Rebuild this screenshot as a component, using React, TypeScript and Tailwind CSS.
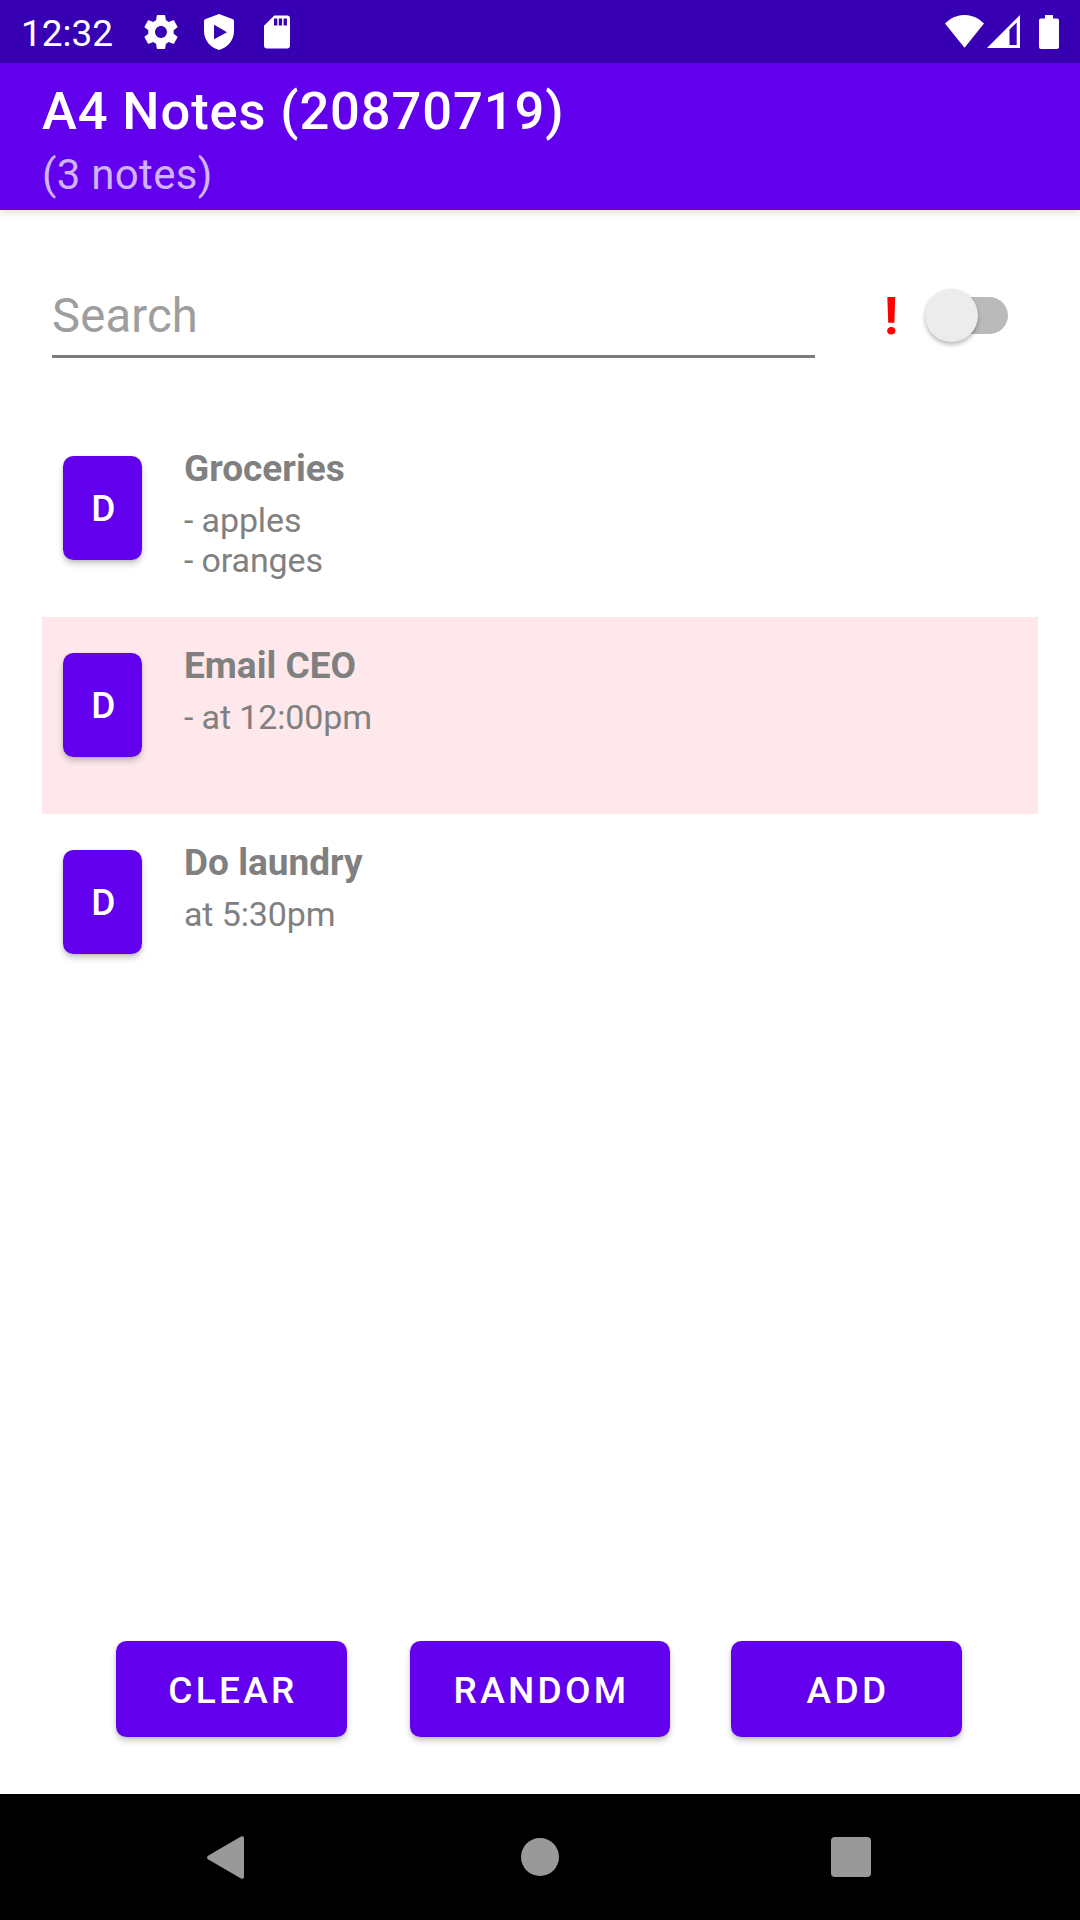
import React from "react";

type Note = { title: string; body: string; important?: boolean };

const notes: Note[] = [
  { title: "Groceries", body: "- apples\n- oranges" },
  { title: "Email CEO", body: "- at 12:00pm", important: true },
  { title: "Do laundry", body: "at 5:30pm" },
];

const buttonShadow = "shadow-[0_4px_6px_rgba(0,0,0,0.2),0_1px_3px_rgba(0,0,0,0.1)]";

function StatusBar() {
  return (
    <div className="flex h-[63px] items-center bg-[#3700b3] text-white">
      <span className="ml-[21px] mt-[4px] w-[123px] text-[37px] leading-none">12:32</span>
      <svg className="h-[34px] w-[34px] shrink-0" viewBox="2 2 20 20" fill="currentColor">
        <path d="M19.43 12.98c.04-.32.07-.64.07-.98s-.03-.66-.07-.98l2.11-1.65c.19-.15.24-.42.12-.64l-2-3.46c-.12-.22-.39-.3-.61-.22l-2.49 1c-.52-.4-1.08-.73-1.69-.98l-.38-2.65C14.46 2.18 14.25 2 14 2h-4c-.25 0-.46.18-.49.42l-.38 2.65c-.61.25-1.17.59-1.69.98l-2.49-1c-.23-.09-.49 0-.61.22l-2 3.46c-.13.22-.07.49.12.64l2.11 1.65c-.04.32-.07.65-.07.98s.03.66.07.98l-2.11 1.65c-.19.15-.24.42-.12.64l2 3.46c.12.22.39.3.61.22l2.49-1c.52.4 1.08.73 1.69.98l.38 2.65c.03.24.24.42.49.42h4c.25 0 .46-.18.49-.42l.38-2.65c.61-.25 1.17-.59 1.69-.98l2.49 1c.23.09.49 0 .61-.22l2-3.46c.12-.22.07-.49-.12-.64l-2.11-1.65zM12 15.5c-1.93 0-3.5-1.57-3.5-3.5s1.57-3.5 3.5-3.5 3.5 1.57 3.5 3.5-1.57 3.5-3.5 3.5z" />
      </svg>
      <svg className="ml-[26px] h-[36px] w-[30px] shrink-0" viewBox="0 0 30 36" fill="currentColor">
        <path fillRule="evenodd" d="M15 0 29 5.2Q30 5.6 30 7V17C30 26 24 33.5 15 36C6 33.5 0 26 0 17V7Q0 5.6 1 5.2ZM10 12V24.3Q10 25.3 11 24.8L23 18.2L11 11.2Q10 10.8 10 12Z" />
      </svg>
      <svg className="ml-[30px] h-[34px] w-[26px] shrink-0" viewBox="0 0 26 34" fill="currentColor">
        <path fillRule="evenodd" d="M10.3 .5H23Q26 .5 26 3.5V30.5Q26 33.5 23 33.5H3Q0 33.5 0 30.5V10.8ZM10 3.5V10.5H13.3V3.5ZM14.8 3.5V10.5H18.1V3.5ZM19.6 3.5V10.5H22.9V3.5Z" />
      </svg>
      <svg className="ml-auto h-[33px] w-[39px] shrink-0" viewBox="0 0 39 33" fill="currentColor">
        <path d="M0 8.6C11-2.9 28-2.9 39 8.6L19.5 32.8Z" />
      </svg>
      <svg className="ml-[3px] h-[33px] w-[33px] shrink-0" viewBox="0 0 33 33" fill="currentColor">
        <path fillRule="evenodd" d="M33 0V33H0ZM22.5 14.5V30H29.7V7.5Z" />
      </svg>
      <svg className="ml-[19px] mr-[21px] h-[34px] w-[20px] shrink-0" viewBox="0 0 20 34" fill="currentColor">
        <path d="M6 0H14V3.5H18Q20 3.5 20 5.5V32Q20 34 18 34H2Q0 34 0 32V5.5Q0 3.5 2 3.5H6Z" />
      </svg>
    </div>
  );
}

function Switch() {
  return (
    <div className="relative ml-[28px] flex h-[53px] w-[83px] items-center justify-end">
      <div className="h-[37px] w-[74px] rounded-full bg-[#bababa]" />
      <div className="absolute left-0 top-0 size-[53px] rounded-full bg-[#ececec] shadow-[0_3px_4px_rgba(0,0,0,0.25),0_0_2px_rgba(0,0,0,0.08)]" />
    </div>
  );
}

function NoteRow({ note }: { note: Note }) {
  return (
    <div className={`flex h-[197px] pl-[21px] pt-[36px] ${note.important ? "bg-[#ffe8eb]" : ""}`}>
      <button className={`h-[104px] w-[79px] rounded-[10.5px] bg-[#6200ee] pl-[5px] pt-[2px] text-[37px] font-medium tracking-[0.0893em] text-white ${buttonShadow}`}>
        D
      </button>
      <div className="-mt-[9px] ml-[42px] text-[#808080]">
        <div className="text-[37px] font-bold leading-[43px]">{note.title}</div>
        <div className="mt-[10px] whitespace-pre-line text-[34px] leading-[40px] tracking-[-0.13px]">{note.body}</div>
      </div>
    </div>
  );
}

function ActionButton({ label, width }: { label: string; width: string }) {
  return (
    <button className={`h-[96px] rounded-[10.5px] bg-[#6200ee] pl-[3px] pt-[4px] text-[37px] font-medium tracking-[0.0893em] text-white ${width} ${buttonShadow}`}>
      {label}
    </button>
  );
}

export default function App() {
  return (
    <div className="flex h-[1920px] w-[1080px] flex-col overflow-hidden bg-white font-[Roboto,sans-serif]">
      <StatusBar />
      <header className="h-[147px] bg-[#6200ee] pl-[42px] pt-[17px] shadow-[0_3px_8px_rgba(0,0,0,0.13)]">
        <h1 className="text-[52.5px] font-medium leading-[62px] tracking-[0.0168em] text-white">A4 Notes (20870719)</h1>
        <p className="mt-[8px] text-[42px] leading-[50px] tracking-[0.0075em] text-[#d0b3fa]">(3 notes)</p>
      </header>
      <main className="flex flex-1 flex-col">
        <div className="flex h-[210px] pt-[63px]">
          <div className="ml-[52px] h-[85px] w-[763px] border-b-[3px] border-[#7b7b7b] pt-[15px] text-[47.25px] leading-[56px] tracking-[0.15px] text-[#9e9e9e]">Search</div>
          <div className="ml-[69px] mt-[16px] flex h-[53px] items-center">
            <span className="w-[13px] pt-[2px] text-[52.5px] font-bold leading-[53px] text-[#ff0000]">!</span>
            <Switch />
          </div>
        </div>
        <div className="mx-[42px]">
          {notes.map((n) => (
            <NoteRow key={n.title} note={n} />
          ))}
        </div>
        <div className="mb-[57px] mt-auto flex pl-[116px]">
          <ActionButton label="CLEAR" width="w-[231px]" />
          <div className="w-[63px]" />
          <ActionButton label="RANDOM" width="w-[260px]" />
          <div className="w-[61px]" />
          <ActionButton label="ADD" width="w-[231px]" />
        </div>
      </main>
      <nav className="flex h-[126px] items-center bg-black text-[#999999]">
        <svg className="ml-[207px] h-[43px] w-[37px]" viewBox="0 0 37 43" fill="currentColor">
          <path d="M1 19.7 34 .6Q37-.6 37 2.5V40.5Q37 43.6 34 42.4L1 23.3Q-1 21.5 1 19.7Z" />
        </svg>
        <div className="ml-[277px] size-[38px] rounded-full bg-[#999999]" />
        <div className="ml-[272px] size-[40px] rounded-[4px] bg-[#999999]" />
      </nav>
    </div>
  );
}
